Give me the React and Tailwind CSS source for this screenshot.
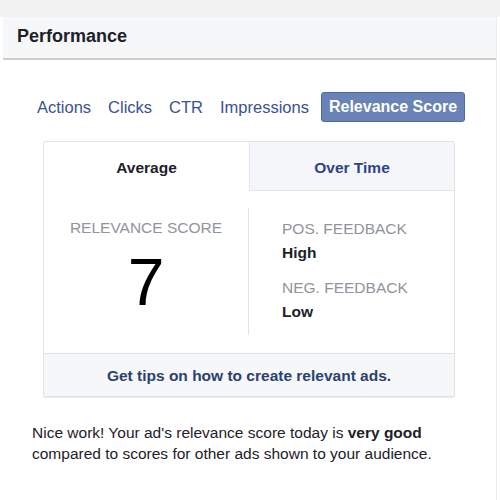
import React from "react";

const links = ["Actions", "Clicks", "CTR", "Impressions"];

const App = () => {
    return (
        <div className="w-[500px] h-[500px] bg-white overflow-hidden" style={{ fontFamily: '"Liberation Sans", Arial, sans-serif' }}>
            {/* top strip */}
            <div className="h-[17px] bg-[#f2f2f2]" />

            <div className="ml-[3px] mr-[3px] border-r border-[#ececec] h-[483px]">
                {/* header */}
                <div className="h-[43px] bg-[#f6f7f9] border-b-2 border-[#cdcdcd] flex items-center pl-[14px] pb-[2px]">
                    <span className="text-[18px] font-bold text-[#1d2129]">Performance</span>
                </div>

                {/* metric tabs */}
                <div className="mt-[32px] flex justify-center items-center gap-[3px] -ml-[4px]">
                    {links.map((l) => (
                        <span key={l} className="px-[7px] text-[16.5px] text-[#3b5290] leading-[30px]">
                            {l}
                        </span>
                    ))}
                    <span className="ml-[2px] px-[7px] h-[30px] leading-[28px] rounded-[3px] bg-[#6a83b6] border border-[#4e6aa5] text-[16px] font-bold text-white">
                        Relevance Score
                    </span>
                </div>

                {/* card */}
                <div className="mt-[19px] ml-[40px] w-[412px] border border-[#e3e3e3] rounded-[2px] shadow-[0_1px_1px_rgba(0,0,0,0.08)]">
                    <div className="flex h-[49px]">
                        <div className="w-[205px] flex items-center justify-center pt-[3px] text-[15.5px] font-bold text-[#1d2129]">
                            Average
                        </div>
                        <div className="flex-1 flex items-center justify-center pt-[3px] bg-[#f5f6fa] border-l border-b border-[#e5e6ea] text-[15.5px] font-bold text-[#2d4486]">
                            Over Time
                        </div>
                    </div>

                    <div className="flex h-[162px]">
                        <div className="w-[205px] mt-[17px] mb-[18px] border-r border-[#e3e3e3] flex flex-col items-center">
                            <div className="pt-[10px] text-[15.5px] leading-[20px] text-[#90949c]">RELEVANCE SCORE</div>
                            <div className="mt-[11px] text-[66px] leading-none text-black">7</div>
                        </div>
                        <div className="flex-1 mt-[17px] pl-[33px] pt-[11px] text-[15.5px] leading-[20px]">
                            <div className="text-[#90949c]">POS. FEEDBACK</div>
                            <div className="mt-[4px] font-bold text-[#1d2129]">High</div>
                            <div className="mt-[15px] text-[#90949c]">NEG. FEEDBACK</div>
                            <div className="mt-[4px] font-bold text-[#1d2129]">Low</div>
                        </div>
                    </div>

                    <div className="h-[43px] bg-[#f6f7f9] border-t border-[#e3e3e3] flex items-center justify-center pt-[1px]">
                        <span className="text-[15.5px] font-bold text-[#2b4170]">Get tips on how to create relevant ads.</span>
                    </div>
                </div>

                {/* summary */}
                <p className="mt-[25px] pl-[29px] text-[15.5px] leading-[21px] text-[#1d2129]">
                    Nice work! Your ad's relevance score today is <b>very good</b>
                    <br />
                    compared to scores for other ads shown to your audience.
                </p>
            </div>
        </div>
    );
};

export default App;
